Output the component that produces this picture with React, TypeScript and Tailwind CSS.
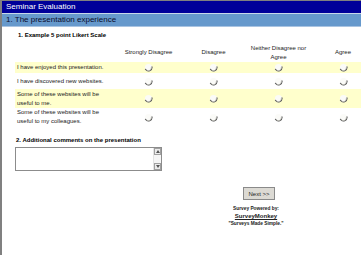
import React from 'react';

const columns = ['Strongly Disagree', 'Disagree', 'Neither Disagree nor Agree', 'Agree'];

const rows = [
  { label: 'I have enjoyed this presentation.', shaded: true, h: 'h-[11px]' },
  { label: 'I have discovered new websites.', shaded: false, h: 'h-[16px]' },
  { label: 'Some of these websites will be useful to me.', shaded: true, h: 'h-[19px]' },
  { label: 'Some of these websites will be useful to my colleagues.', shaded: false, h: 'h-[18px]' },
];

function Radio() {
  return (
    <svg width="9" height="9" viewBox="0 0 10 10">
      <circle cx="5" cy="5" r="4" fill="#fbfbf8" />
      <path d="M1.6 7 A4 4 0 0 0 8.9 4.2" fill="none" stroke="#5a5a5a" strokeWidth="1.2" strokeLinecap="round" />
      <path d="M2.6 7.6 A3.2 3.2 0 0 0 8 4.8" fill="none" stroke="#c4c4bc" strokeWidth="0.8" />
    </svg>
  );
}

export default function App() {
  return (
    <div className="min-h-[255px] w-[361px] overflow-hidden border-l-2 border-[#808080] bg-white font-['Liberation_Sans',Arial,sans-serif] text-black">
      {/* title bars */}
      <div className="flex h-[13px] items-center border-t border-[#808080] bg-[#000099] pl-[4px] text-[8px] text-white">
        Seminar Evaluation
      </div>
      <div className="flex h-[14px] items-center border-t border-[#c8d8ea] border-b border-b-[#a9c4e2] bg-[#6699cc] pl-[4px] text-[8px] text-[#0a0a2a]">
        1. The presentation experience
      </div>

      <div className="pl-[13px]">
        <div className="pt-[4px] pl-[3px] text-[6px] font-bold leading-[9px]">1. Example 5 point Likert Scale</div>

        {/* likert grid */}
        <div className="mt-[3px] grid grid-cols-[101px_65px_65px_65px_1fr] text-[6px] leading-[9px] text-[#222]">
          <div className="h-[19px]" />
          {columns.map((c, i) => (
            <div
              key={c}
              className={`flex h-[19px] items-center justify-center text-center ${i === 3 ? 'pl-[14px]' : ''}`}
            >
              {c}
            </div>
          ))}

          {rows.map(r => (
            <React.Fragment key={r.label}>
              <div className={`flex items-center pl-[2px] pr-[8px] ${r.h} ${r.shaded ? 'bg-[#ffffcc]' : ''}`}>
                {r.label}
              </div>
              {columns.map((c, i) => (
                <div
                  key={c}
                  className={`flex items-center justify-center ${r.h} ${r.shaded ? 'bg-[#ffffcc]' : ''} ${i === 3 ? 'pl-[14px]' : ''}`}
                >
                  <Radio />
                </div>
              ))}
            </React.Fragment>
          ))}
        </div>

        {/* comments */}
        <div className="mt-[10px] pl-[1px] text-[6px] font-bold leading-[9px]">2. Additional comments on the presentation</div>
        <div className="mt-[2px] flex h-[24px] w-[147px] border border-[#8c8c8c] bg-white">
          <div className="flex-1" />
          <div className="flex w-[8px] flex-col justify-between border-l border-[#e4e4e4] bg-[#f6f6f6]">
            <div className="flex h-[7px] items-center justify-center border border-[#a0a0a0] bg-[#ececec]">
              <svg width="4" height="3" viewBox="0 0 4 3"><path d="M0 3 L2 0 L4 3 Z" fill="#555" /></svg>
            </div>
            <div className="flex h-[7px] items-center justify-center border border-[#a0a0a0] bg-[#ececec]">
              <svg width="4" height="3" viewBox="0 0 4 3"><path d="M0 0 L2 3 L4 0 Z" fill="#555" /></svg>
            </div>
          </div>
        </div>

        {/* footer */}
        <div className="ml-[191px] mt-[16px] flex w-[100px] flex-col items-center">
          <button className="ml-[6px] h-[13px] w-[32px] border border-[#8a8a8a] bg-[#dcdad4] text-[6px] leading-none text-[#222]">
            Next &gt;&gt;
          </button>
          <div className="mt-[5px] text-[4.8px] font-bold leading-[7px] text-[#222]">Survey Powered by:</div>
          <div className="text-[6px] font-bold leading-[8px] text-[#222] underline">SurveyMonkey</div>
          <div className="text-[4.8px] font-bold leading-[7px] text-[#222]">"Surveys Made Simple."</div>
        </div>
      </div>
    </div>
  );
}
